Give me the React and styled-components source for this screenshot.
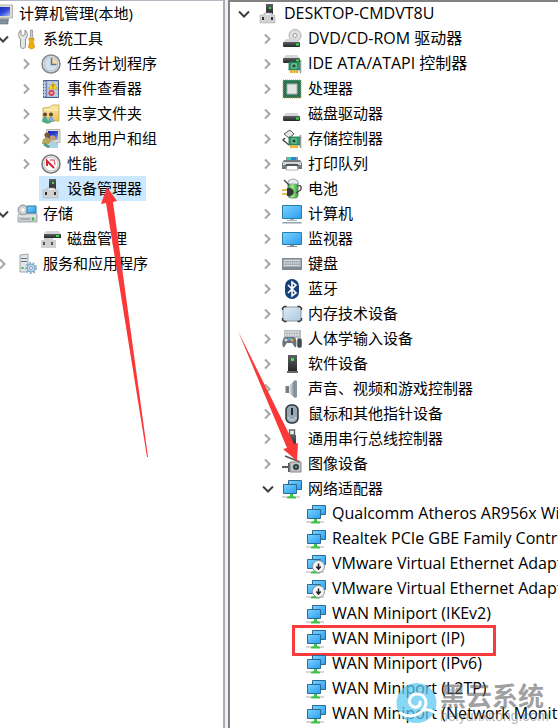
import React from "react";
import styled, { createGlobalStyle, css } from "styled-components";

const GlobalStyle = createGlobalStyle`
  * { box-sizing: border-box; }
  body {
    margin: 0;
    background: #f0f0f0;
    color: #000;
    font-family: "Open Sans", "Noto Sans CJK SC", sans-serif;
    font-size: 15px;
    line-height: 25px;
    overflow: hidden;
  }
`;

const Window = styled.main`
  position: relative;
  display: grid;
  grid-template-columns: 225px minmax(0, 1fr);
  column-gap: 3px;
  height: 100vh;
  overflow: hidden;
`;

const Pane = styled.section`
  background: #fff;
  overflow: hidden;
  ${(p) =>
    p.$side === "console"
      ? css`
          border-top: 1px solid #b4b8c2;
          border-right: 2px solid #a9adb8;
        `
      : css`
          border-top: 2px solid #828282;
          border-left: 2px solid #828282;
        `}
`;

const Tree = styled.ul`
  list-style: none;
  margin: ${(p) => (p.$side === "console" ? "0 0 0 -31px" : "-1px 0 0 4px")};
  padding: 0;
`;

const Row = styled.li`
  position: relative;
  display: flex;
  align-items: center;
  height: 25px;
  padding-left: ${(p) => p.$level * 24}px;
  white-space: nowrap;
`;

const Toggle = styled.button`
  flex: none;
  display: flex;
  align-items: center;
  justify-content: center;
  width: 20px;
  height: 25px;
  margin-right: 2px;
  padding: 0;
  border: 0;
  background: none;
  color: ${(p) => (p.$open ? "#404040" : "#a6a6a6")};
`;

const ToggleSpace = styled.span`
  flex: none;
  width: 22px;
`;

const Entry = styled.span`
  display: flex;
  align-items: center;
  gap: 6px;
  padding: 0 4px 0 2px;
  background: ${(p) => (p.$selected ? "#cce8ff" : "transparent")};
`;

const Label = styled.span`
  font-size: ${(p) => (p.$latin ? 16 : 15)}px;
`;

const Icon = styled.svg`
  flex: none;
  display: block;
  width: 20px;
  height: 20px;
  overflow: visible;
`;

const Marker = styled.span`
  position: absolute;
  top: -1px;
  left: 58px;
  width: 204px;
  height: 31px;
  border: 3px solid #f83b3c;
  pointer-events: none;
`;

const Arrows = styled.svg`
  position: absolute;
  top: 0;
  left: 0;
  width: 558px;
  height: 728px;
  pointer-events: none;
`;

const Watermark = styled.div`
  position: absolute;
  top: 682px;
  left: 396px;
  display: flex;
  gap: 3px;
  pointer-events: none;
`;

const WatermarkLogo = styled.svg`
  width: 41px;
  height: 42px;
`;

const WatermarkText = styled.div`
  display: grid;
`;

const WatermarkName = styled.span`
  color: rgba(95, 95, 98, 0.6);
  font: 700 26px/26px "Noto Sans CJK SC", sans-serif;
`;

const WatermarkSite = styled.span`
  color: rgba(110, 110, 114, 0.5);
  font: 14px/16px "Liberation Sans", sans-serif;
`;

function Gradients() {
  return (
    <defs>
      <linearGradient id="screen" x1="0" y1="0" x2="1" y2="1">
        <stop offset="0" stopColor="#7bd3ff" />
        <stop offset="1" stopColor="#2b9cf0" />
      </linearGradient>
      <linearGradient id="navy" x1="0" y1="0" x2="1" y2="1">
        <stop offset="0" stopColor="#1820a8" />
        <stop offset="0.55" stopColor="#2f48dc" />
        <stop offset="1" stopColor="#a8bdf8" />
      </linearGradient>
      <linearGradient id="dark" x1="0" y1="0" x2="0" y2="1">
        <stop offset="0" stopColor="#5e6163" />
        <stop offset="1" stopColor="#242628" />
      </linearGradient>
      <linearGradient id="folder" x1="0" y1="0" x2="0" y2="1">
        <stop offset="0" stopColor="#fae9a6" />
        <stop offset="1" stopColor="#e8c35b" />
      </linearGradient>
      <linearGradient id="slate" x1="0" y1="0" x2="1" y2="0">
        <stop offset="0" stopColor="#e6edf2" />
        <stop offset="1" stopColor="#71808c" />
      </linearGradient>
      <linearGradient id="glass" x1="0" y1="0" x2="1" y2="1">
        <stop offset="0" stopColor="#e0ebf4" />
        <stop offset="1" stopColor="#acc9e0" />
      </linearGradient>
      <linearGradient id="cell" x1="0" y1="0" x2="1" y2="0">
        <stop offset="0" stopColor="#2f9e3a" />
        <stop offset="0.4" stopColor="#a5f08f" />
        <stop offset="1" stopColor="#2f9e3a" />
      </linearGradient>
    </defs>
  );
}

const Drive = ({ y = 12 }) => (
  <g transform={`translate(0 ${y})`}>
    <path d="M4 0h11l3 3.500H1z" fill="#d3d5d6" />
    <rect x="1" y="3" width="17" height="5" rx="1" fill="url(#dark)" />
    <rect x="14" y="4.500" width="3" height="2" fill="#35e046" />
  </g>
);

const Card = () => (
  <g>
    <rect x="7" y="8" width="11" height="8" fill="#2f9a68" stroke="#1b7350" strokeWidth=".8" />
    <path d="M18.500 6v13" stroke="#929899" strokeWidth="1.500" />
    <rect x="10" y="10" width="4" height="4" fill="#174f3b" stroke="#a9e3ba" strokeWidth=".8" />
    <path d="M8 16.500h8v2.500H8z" fill="#f6a91e" />
    <path d="M10.500 16.500V19M13 16.500V19" stroke="#ffe080" strokeWidth=".6" />
  </g>
);

const DeviceBase = () => (
  <g>
    <rect x="8" y="0" width="7" height="10" fill="url(#dark)" />
    <rect x="11" y="3" width="2" height="2" fill="#35e046" />
    <path d="M6 9h8v2h3v8H2v-8h4z" fill="#cfd1d2" stroke="#aeb1b3" strokeWidth=".6" />
    <path d="M5 13v3M14 13v3" stroke="#333" strokeWidth="2" />
    <path d="M7 11l3-2 3 2" fill="#f8f8f8" />
  </g>
);

const Network = () => (
  <g>
    <path d="M6.500 1.500h13v9h-13z" fill="url(#screen)" stroke="#286c96" />
    <path d="M1.500 5.500h13v9h-13z" fill="url(#screen)" stroke="#286c96" />
    <path d="M0 17h18v2H0z" fill="#d3d8d6" />
    <path d="M8 15h3v2l3 1v1.500H5V18l3-1z" fill="#3fc64a" />
  </g>
);

const Keys = () => (
  <g>
    <rect y="4" width="20" height="12" fill="#7f8a92" />
    <path d="M1 5h18v8H1z" fill="#a3acb3" />
    <path d="M2 6.500h16M2 9h16M2 11.500h16" stroke="#eef1f3" strokeWidth="1.200" strokeDasharray="1.500 .7" />
  </g>
);

const drawings = {
  root: (
    <g>
      <path d="M1 1h18.500v13H1z" fill="#dedbd0" stroke="#b6b4ad" />
      <path d="M3 3h14v9H3z" fill="url(#navy)" />
      <path d="M4 14h12v3H4z" fill="#a3aaae" />
      <path d="M1 16h14v4H1z" fill="#84939b" stroke="#5c6c75" strokeWidth=".6" />
    </g>
  ),
  tools: (
    <g>
      <path d="M4 1v4.500l2 1.500 2-1.500V1c3 2 3 7 .5 9v7.500c0 2.500-5 2.500-5 0V10C1 8 1 3 4 1z" fill="#e5e6e6" stroke="#8b8f91" />
      <path d="M13.500 1h2l.4 9h-2.800z" fill="#c7cacb" stroke="#868a8b" strokeWidth=".7" />
      <path d="M12 9.500h5v2l-1 1 1.500 5c0 3-6 3-6 0l1.500-5-1-1z" fill="#f2ad13" stroke="#c98200" strokeWidth=".7" />
    </g>
  ),
  clock: (
    <g>
      <circle cx="10" cy="10" r="9" fill="#e2e4e5" stroke="#848789" strokeWidth="1.500" />
      <circle cx="10" cy="10" r="7" fill="#cfe0f1" stroke="#b9bdc0" />
      <path d="M10 10V4a6 6 0 0 1 6 6z" fill="#f7d9a0" />
      <path d="M10.500 4v6.500h5" fill="none" stroke="#66737e" strokeWidth="1.500" />
    </g>
  ),
  events: (
    <g>
      <path d="M2.500 1.500h15v17h-15z" fill="#a9bde0" stroke="#4a6193" />
      <path d="M5 2v16" stroke="#40578b" />
      <path d="M7 4h10M7 7h10M7 10h10M7 13h10M7 16h10" stroke="#dce6f8" />
      <path d="M2 4h3M2 7h3M2 10h3M2 13h3M2 16h3" stroke="#eee" />
      <path d="M12 3l4.500 7h-9z" fill="#ffdc24" stroke="#c69a00" strokeWidth=".6" />
      <path d="M12 5.500v2M12 8.500v.8" stroke="#222" />
      <circle cx="10.500" cy="14" r="3" fill="#db3944" />
      <path d="M9.300 12.800l2.400 2.400M11.700 12.800l-2.400 2.400" stroke="#fff" strokeWidth=".8" />
    </g>
  ),
  share: (
    <g>
      <path d="M2 4l7-1 2-2h7v16H2z" fill="url(#folder)" stroke="#cda64a" strokeWidth=".8" />
      <path d="M3 6h14" stroke="#fff7c9" />
      <path d="M1 18c0-7 6-7 6 0z" fill="#50a999" />
      <path d="M7 18c0-7 6-7 6 0z" fill="#74aed6" />
      <circle cx="4" cy="10.500" r="2" fill="#5f4630" />
      <circle cx="10" cy="10.500" r="2" fill="#5f4630" />
      <path d="M2 17c3 2 6 2 8 0" fill="none" stroke="#4cb06b" strokeWidth="2" />
    </g>
  ),
  users: (
    <g>
      <path d="M5.500.5H19v13H5.500z" fill="#dedbcf" stroke="#b5b3ac" />
      <path d="M7 2h10v9H7z" fill="url(#navy)" />
      <path d="M9 14h8v3H9z" fill="#b8b9b8" />
      <path d="M1 15c0-9 9-9 10 0z" fill="#b9a65e" />
      <circle cx="6" cy="6" r="2.600" fill="#80583b" />
      <path d="M7 19c0-9 10-9 10 0z" fill="#a9d3e6" />
      <circle cx="11.500" cy="9" r="2.800" fill="#c99a72" />
      <path d="M3 15l5 3" stroke="#58997c" strokeWidth="3" />
    </g>
  ),
  perf: (
    <g>
      <circle cx="10" cy="10" r="9" fill="#fff" stroke="#77797b" strokeWidth="1.600" />
      <circle cx="10" cy="10" r="7" fill="#fff" stroke="#b9bbbc" />
      <path d="M6 12V7l7 7" fill="none" stroke="#d42332" strokeWidth="2" />
      <path d="M9 6h4l1 5" fill="none" stroke="#e36b70" strokeWidth="1.300" />
    </g>
  ),
  device: <DeviceBase />,
  storage: (
    <g>
      <path d="M2 10l2-2h14l2 2v8H1v-7z" fill="#cbd0d1" stroke="#92999c" strokeWidth=".8" />
      <circle cx="6" cy="6" r="5" fill="#cdd2d4" stroke="#8a9194" />
      <circle cx="6" cy="6" r="1.800" fill="#fff" />
      <path d="M10 2h9v7h-9z" fill="url(#screen)" stroke="#2b789b" />
      <path d="M1 12h18" stroke="#f4f5f5" />
      <path d="M3 15h10" stroke="#838b8e" />
      <rect x="15" y="13.500" width="2" height="3" fill="#36bd41" />
    </g>
  ),
  disk: (
    <g>
      <path d="M5 2h13l1.500 3H3z" fill="#d3d5d6" />
      <path d="M3 5h17v4H3z" fill="url(#dark)" />
      <path d="M15 6h3v2h-3z" fill="#39df45" />
      <path d="M3 9h9v2h3v8H0v-8h3z" fill="#cfd1d2" />
      <path d="M3 13v3M11 13v3" stroke="#3d3f40" strokeWidth="1.700" />
    </g>
  ),
  services: (
    <g>
      <path d="M3 1l8-1v18H3z" fill="#e1e6e9" stroke="#8d9699" strokeWidth=".8" />
      <path d="M4 4.500h6M4 7.500h6" stroke="#65777e" strokeWidth="1.200" />
      <rect x="4.500" y="13" width="2" height="2" fill="#41ae4e" />
      <circle cx="14" cy="14" r="5" fill="none" stroke="#8db0cc" strokeWidth="2" strokeDasharray="2 1.500" />
      <circle cx="14" cy="14" r="4" fill="#bcd8ed" stroke="#7ea4c2" />
      <circle cx="14" cy="14" r="1.500" fill="#fff" stroke="#7ea4c2" />
    </g>
  ),
  dvd: (
    <g>
      <circle cx="13" cy="6.500" r="6" fill="#dfe1e2" stroke="#acafb1" />
      <circle cx="13" cy="6.500" r="2" fill="#fff" stroke="#999" />
      <Drive y={10} />
    </g>
  ),
  ide: (
    <g>
      <Drive y={1} />
      <Card />
    </g>
  ),
  cpu: (
    <g>
      <rect x="1" y="1" width="18" height="18" fill="#2b7856" stroke="#b1a168" strokeDasharray="1 1" />
      <path d="M2 2h16v16H2z" fill="#2b7352" />
      <path d="M5 5h10v10H5z" fill="#e2e5e4" stroke="#a8b1ad" />
    </g>
  ),
  drive: <Drive y={9} />,
  controller: (
    <g>
      <path d="M2 5l6-4 4 4-5 4z" fill="#e9e9e9" stroke="#56595b" />
      <path d="M3 9l-2 2 6 5" fill="none" stroke="#4f5254" strokeWidth="1.500" />
      <Card />
    </g>
  ),
  printer: (
    <g>
      <path d="M4 3h12v4H4z" fill="#8f979c" />
      <path d="M5 3h4v4H5z" fill="#42cdb0" />
      <path d="M9 3h5v4H9z" fill="#2782e8" />
      <path d="M2 6h16l2 3v6H0V9z" fill="#747a7e" />
      <path d="M1 8h18v3H1z" fill="#d2d5d6" />
      <path d="M5 11h10l1 5H4z" fill="#fff" stroke="#929698" strokeWidth=".7" />
      <path d="M4 11h12" stroke="#292b2c" strokeWidth="1.500" />
    </g>
  ),
  battery: (
    <g>
      <rect x="6" y="1" width="10" height="18" rx="3" fill="url(#cell)" stroke="#4d7a54" strokeWidth=".8" />
      <path d="M6 5V3c2-4 8-4 10 0v2z" fill="#e8edf4" stroke="#8c949c" strokeWidth=".8" />
      <path d="M2 1l5 5M16 7c4-2 4 4 1 5l-3 2" fill="none" stroke="#444" strokeWidth="1.300" />
      <path d="M5 9h3c5 1 5 7 0 8H5z" fill="#35383a" />
      <path d="M0 11h5M0 15h5" stroke="#d6a42a" strokeWidth="1.500" />
    </g>
  ),
  computer: (
    <g>
      <path d="M.5 1.500h19v13H.5z" fill="url(#screen)" stroke="#287eaa" />
      <path d="M8 15h4v1H8zM5 16h10v1H5z" fill="#a7b4bd" />
      <path d="M1 18h18l1 1.500H0z" fill="#91a3af" />
    </g>
  ),
  monitor: (
    <g>
      <path d="M.5 3.500h19v12H.5z" fill="url(#screen)" stroke="#287eaa" />
      <path d="M8 16h4v1H8zM5 17h10v1H5z" fill="#87939b" />
    </g>
  ),
  keyboard: <Keys />,
  bluetooth: (
    <g>
      <rect x="3" y="0" width="14" height="20" rx="7" fill="#164078" />
      <path d="M6 6l8 8-4 3V3l4 3-8 8" fill="none" stroke="#fff" strokeWidth="1.600" />
    </g>
  ),
  memory: (
    <g>
      <rect x="1" y="3" width="18" height="14" rx="2" fill="url(#glass)" stroke="#8b98a2" />
      <path d="M.5 6V4l2-1.500h2M15.500 2.500h2l2 1.500v2M19.500 14v2l-2 1.500h-2M4.500 17.500h-2L.5 16v-2" fill="none" stroke="#34393d" strokeWidth="1.400" />
    </g>
  ),
  hid: (
    <g>
      <path d="M2 1h17v8H2z" fill="#b6bdc2" />
      <path d="M3 3h15M3 6h15" stroke="#fff" strokeDasharray="1.500 1" />
      <path d="M3 8h9c3 1 3 8 2 10-2 1-3-4-4-4H5c-1 0-2 5-4 4C0 16 0 9 3 8z" fill="#66737d" />
      <circle cx="10" cy="11" r="1.500" fill="#f1a83c" />
      <circle cx="7.500" cy="10" r="1.300" fill="#48b6f1" />
      <path d="M2.500 11h3M4 9.500v3" stroke="#fff" />
      <rect x="15" y="9" width="5" height="10" rx="2" fill="#424a50" stroke="#fff" strokeWidth=".5" />
    </g>
  ),
  software: (
    <g>
      <path d="M6 1h9v16H6z" fill="url(#dark)" />
      <path d="M5 17h11v2H5z" fill="#696c6e" />
      <path d="M9 4h3v3H9z" fill="#42e845" />
    </g>
  ),
  audio: (
    <g>
      <path d="M3.500 7h4v7h-4z" fill="#727d86" />
      <path d="M7 7l6-6v18l-6-5z" fill="url(#slate)" />
      <path d="M13 1l2 1v16l-2 1z" fill="#8a959e" />
    </g>
  ),
  mouse: (
    <g>
      <rect x="4" y="1" width="12" height="18" rx="5" fill="#98a7b4" stroke="#2d3337" strokeWidth="1.500" />
      <path d="M6 13c1 4 7 4 8 0" stroke="#dfe7ed" fill="none" />
      <path d="M10 4v7" stroke="#22282c" strokeWidth="2" />
    </g>
  ),
  usb: (
    <g>
      <path d="M7.500 1h5v5h-5z" fill="#eee" stroke="#66696b" strokeWidth="1.500" />
      <path d="M6 6h8v8c0 5-8 5-8 0z" fill="url(#dark)" />
    </g>
  ),
  imaging: (
    <g>
      <path d="M3 2l15 6" stroke="#505355" strokeWidth="1.800" />
      <path d="M0 12h6v2H0zM6 9h2v9H6z" fill="#575b5d" />
      <path d="M8 8h11v10H8z" fill="#c2c4c5" stroke="#888" />
      <circle cx="14" cy="13" r="3" fill="#34393b" />
      <circle cx="14" cy="13" r="1.200" fill="#43a5aa" />
    </g>
  ),
  network: <Network />,
  vmnet: (
    <g>
      <Network />
      <circle cx="12.500" cy="12.500" r="6" fill="#f4f4f4" stroke="#8d9194" />
      <path d="M12.500 9.500v5M10.300 12.500l2.200 2.500 2.200-2.500" fill="none" stroke="#222" strokeWidth="1.500" />
    </g>
  ),
};

const consoleItems = [
  { label: "计算机管理(本地)", icon: "root", level: 0, state: "open" },
  { label: "系统工具", icon: "tools", level: 1, state: "open" },
  { label: "任务计划程序", icon: "clock", level: 2, state: "closed" },
  { label: "事件查看器", icon: "events", level: 2, state: "closed" },
  { label: "共享文件夹", icon: "share", level: 2, state: "closed" },
  { label: "本地用户和组", icon: "users", level: 2, state: "closed" },
  { label: "性能", icon: "perf", level: 2, state: "closed" },
  { label: "设备管理器", icon: "device", level: 2, selected: true },
  { label: "存储", icon: "storage", level: 1, state: "open" },
  { label: "磁盘管理", icon: "disk", level: 2 },
  { label: "服务和应用程序", icon: "services", level: 1, state: "closed" },
];

const category = (label, icon) => ({ label, icon, level: 1, state: "closed" });
const adapter = (label, icon = "network") => ({ label, icon, level: 2 });

const deviceItems = [
  { label: "DESKTOP-CMDVT8U", icon: "device", level: 0, state: "open" },
  category("DVD/CD-ROM 驱动器", "dvd"),
  category("IDE ATA/ATAPI 控制器", "ide"),
  category("处理器", "cpu"),
  category("磁盘驱动器", "drive"),
  category("存储控制器", "controller"),
  category("打印队列", "printer"),
  category("电池", "battery"),
  category("计算机", "computer"),
  category("监视器", "monitor"),
  category("键盘", "keyboard"),
  category("蓝牙", "bluetooth"),
  category("内存技术设备", "memory"),
  category("人体学输入设备", "hid"),
  category("软件设备", "software"),
  category("声音、视频和游戏控制器", "audio"),
  category("鼠标和其他指针设备", "mouse"),
  category("通用串行总线控制器", "usb"),
  category("图像设备", "imaging"),
  { label: "网络适配器", icon: "network", level: 1, state: "open" },
  adapter("Qualcomm Atheros AR956x Wireless"),
  adapter("Realtek PCIe GBE Family Controller"),
  adapter("VMware Virtual Ethernet Adapter", "vmnet"),
  adapter("VMware Virtual Ethernet Adapter", "vmnet"),
  adapter("WAN Miniport (IKEv2)"),
  { ...adapter("WAN Miniport (IP)"), marked: true },
  adapter("WAN Miniport (IPv6)"),
  adapter("WAN Miniport (L2TP)"),
  adapter("WAN Miniport (Network Monitor)"),
];

function TreeRow({ item }) {
  const open = item.state === "open";
  return (
    <Row
      $level={item.level}
      role="treeitem"
      aria-level={item.level + 1}
      aria-expanded={item.state ? open : undefined}
      aria-selected={Boolean(item.selected)}
    >
      {item.state ? (
        <Toggle $open={open} type="button" aria-label={item.label}>
          <svg width="12" height="12" viewBox="0 0 12 12" fill="none" stroke="currentColor" strokeWidth="2">
            <path d={open ? "M1 3.500l5 5 5-5" : "M3 1.500L7.500 6 3 10.500"} />
          </svg>
        </Toggle>
      ) : (
        <ToggleSpace />
      )}
      <Entry $selected={item.selected}>
        <Icon viewBox="0 0 20 20" aria-hidden="true">
          {drawings[item.icon]}
        </Icon>
        <Label $latin={/^[A-Z]/.test(item.label)}>{item.label}</Label>
      </Entry>
      {item.marked && <Marker />}
    </Row>
  );
}

function TreePane({ side, name, items }) {
  return (
    <Pane $side={side}>
      <Tree $side={side} role="tree" aria-label={name}>
        {items.map((item, index) => (
          <TreeRow key={index} item={item} />
        ))}
      </Tree>
    </Pane>
  );
}

export default function App() {
  return (
    <>
      <GlobalStyle />
      <Window>
        <TreePane side="console" name="计算机管理" items={consoleItems} />
        <TreePane side="devices" name="设备管理器" items={deviceItems} />
        <Arrows viewBox="0 0 558 728" fill="#fb3838" aria-hidden="true">
          <Gradients />
          <path d="M107 187l10 14-4 1 35 255h-1l-41-254-5 1z" />
          <path d="M238 331l56 113 4-1-1 18-14-12 4-1z" />
        </Arrows>
        <Watermark>
          <WatermarkLogo viewBox="0 0 41 42" aria-hidden="true">
            <circle cx="20.500" cy="21" r="20" fill="#58c8f2" opacity=".72" />
            <path
              d="M4 31c8 5 17 3 22-2 7-7 4-17-5-17-7 0-10 8-5 12 4 3 9 0 8-4M27 28c5-1 8 0 11 2"
              fill="none"
              stroke="#fff"
              strokeWidth="3"
              strokeLinecap="round"
            />
          </WatermarkLogo>
          <WatermarkText>
            <WatermarkName>黑云系统</WatermarkName>
            <WatermarkSite>heiyunxitong.com</WatermarkSite>
          </WatermarkText>
        </Watermark>
      </Window>
    </>
  );
}
